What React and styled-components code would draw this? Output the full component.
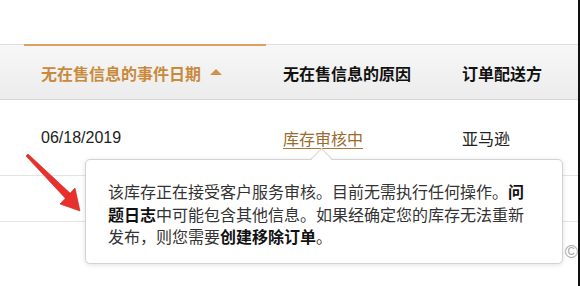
import React from "react";
import styled, { createGlobalStyle } from "styled-components";

const Global = createGlobalStyle`
  html, body { margin: 0; padding: 0; background: #fff; }
  body { font-family: "Liberation Sans", "Noto Sans CJK SC", sans-serif; color: #111; }
`;

const Page = styled.div`
  position: relative;
  width: 580px;
  height: 286px;
  overflow: hidden;
  background: #fff;
  box-sizing: border-box;
  border-right: 2px solid #111;
  padding-top: 44px;
`;

const HeaderRow = styled.div`
  display: grid;
  grid-template-columns: 242px 179px 1fr;
  padding-left: 24px;
  height: 56px;
  box-sizing: border-box;
  border-top: 1px solid #dedede;
  border-bottom: 1px solid #d6d6d6;
  background: linear-gradient(#f7f7f7, #ececec);
`;

const HeadCell = styled.div`
  display: flex;
  align-items: center;
  gap: 9px;
  padding-left: 17px;
  margin-top: -1px;
  border-top: 2px solid ${(p) => (p.$active ? "#d9a062" : "transparent")};
  font-family: "Noto Sans CJK SC", sans-serif;
  font-size: 16px;
  font-weight: 700;
  color: ${(p) => (p.$active ? "#c98a3c" : "#111")};
  white-space: nowrap;
`;

const SortUp = styled.span`
  width: 0;
  height: 0;
  border-left: 6px solid transparent;
  border-right: 6px solid transparent;
  border-bottom: 6px solid #d0914a;
  margin-top: -2px;
`;

const Row = styled.div`
  display: grid;
  grid-template-columns: 242px 179px 1fr;
  padding-left: 24px;
  height: ${(p) => p.$h}px;
  box-sizing: border-box;
  border-bottom: 1px solid ${(p) => (p.$line ? "#e3e3e3" : "transparent")};
`;

const Cell = styled.div`
  position: relative;
  display: flex;
  align-items: center;
  padding-left: 17px;
  font-family: "Liberation Sans", "Noto Sans CJK SC", sans-serif;
  font-size: 16px;
  color: #222;
  white-space: nowrap;
`;

const LinkText = styled.span`
  position: relative;
  font-family: "Noto Sans CJK SC", sans-serif;
  color: #9b6a2e;
  text-decoration: underline;
  text-decoration-color: #a87639;
  text-underline-offset: 3px;
`;

const Tooltip = styled.div`
  position: absolute;
  left: 85px;
  top: 159px;
  width: 478px;
  height: 105px;
  box-sizing: border-box;
  padding: 20px 0 0 22px;
  background: #fff;
  border: 1px solid #d3d3d3;
  border-radius: 5px;
  box-shadow: 0 1px 5px rgba(0, 0, 0, 0.12);
  z-index: 2;
  &::before {
    content: "";
    position: absolute;
    top: -9px;
    left: 228px;
    width: 14px;
    height: 14px;
    background: #fff;
    border-left: 1px solid #d3d3d3;
    border-top: 1px solid #d3d3d3;
    transform: rotate(45deg) scale(1, 1);
    transform-origin: center;
  }
`;

const TipText = styled.p`
  position: relative;
  margin: 0;
  width: 424px;
  font-family: "Noto Sans CJK SC", sans-serif;
  font-size: 16px;
  line-height: 22.5px;
  color: #333;
  b { color: #111; font-weight: 700; }
`;

const Copy = styled.span`
  position: absolute;
  right: 0;
  top: 242px;
  font-family: "Liberation Sans", sans-serif;
  font-size: 18px;
  color: #aaa;
`;

const ArrowSvg = styled.svg`
  position: absolute;
  left: 0;
  top: 0;
  z-index: 3;
`;

export default function App() {
  return (
    <>
      <Global />
      <Page>
        <HeaderRow>
          <HeadCell $active>
            无在售信息的事件日期
            <SortUp />
          </HeadCell>
          <HeadCell>无在售信息的原因</HeadCell>
          <HeadCell>订单配送方</HeadCell>
        </HeaderRow>
        <Row $h={76} $line>
          <Cell>06/18/2019</Cell>
          <Cell>
            <LinkText>库存审核中</LinkText>
          </Cell>
          <Cell style={{ fontFamily: '"Noto Sans CJK SC", sans-serif' }}>亚马逊</Cell>
        </Row>
        <Row $h={46} $line />
        <Tooltip>
          <TipText>
            该库存正在接受客户服务审核。目前无需执行任何操作。<b>问题日志</b>中可能包含其他信息。如果经确定您的库存无法重新发布，则您需要<b>创建移除订单</b>。
          </TipText>
        </Tooltip>
        <Copy>©</Copy>
        <ArrowSvg width="120" height="230" viewBox="0 0 120 230">
          <polygon
            points="26,156 28,154 71,194 66,199"
            fill="#e8302c"
            stroke="#c9211d"
            strokeWidth="0.6"
          />
          <polygon
            points="80,211 60,204 75,188"
            fill="#e8302c"
            stroke="#c9211d"
            strokeWidth="0.6"
          />
        </ArrowSvg>
      </Page>
    </>
  );
}
